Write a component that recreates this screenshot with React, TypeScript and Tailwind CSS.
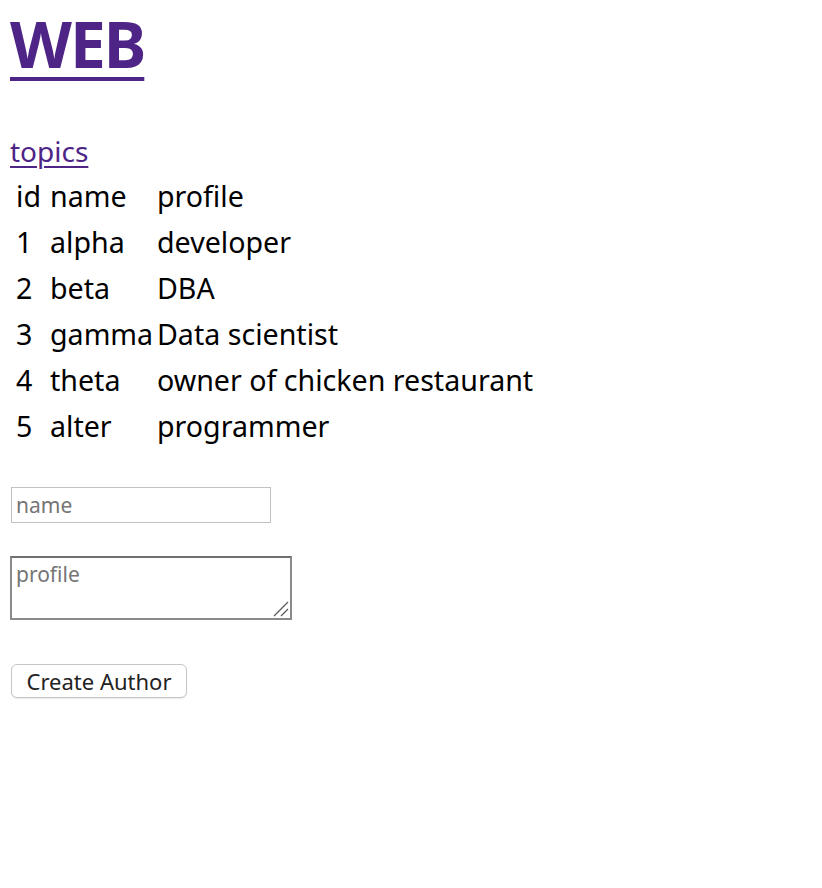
import React from "react";

type Author = { id: number; name: string; profile: string };

const authors: Author[] = [
  { id: 1, name: "alpha", profile: "developer" },
  { id: 2, name: "beta", profile: "DBA" },
  { id: 3, name: "gamma", profile: "Data scientist" },
  { id: 4, name: "theta", profile: "owner of chicken restaurant" },
  { id: 5, name: "alter", profile: "programmer" },
];

export default function App() {
  return (
    <div className="min-h-screen bg-white px-[10px] text-black font-['Noto_Sans',sans-serif]">
      <h1 className="pt-[6px] text-[64px] font-bold leading-[76px] tracking-[-2px]">
        <a href="#" className="text-[#4e2587] underline decoration-[4px] underline-offset-[9px]">
          WEB
        </a>
      </h1>

      <div className="mt-[51px] text-[28px] leading-[36px]">
        <a href="#" className="text-[#4e2587] underline decoration-[2px] underline-offset-[4px]">
          topics
        </a>
      </div>

      <div className="mt-[4px] grid grid-cols-[34px_107px_auto] pl-[6px] text-[28.6px]">
        <div className="leading-[46px]">id</div>
        <div className="leading-[46px]">name</div>
        <div className="leading-[46px]">profile</div>
        {authors.map((a) => (
          <React.Fragment key={a.id}>
            <div className="leading-[46px]">{a.id}</div>
            <div className="leading-[46px]">{a.name}</div>
            <div className="leading-[46px]">{a.profile}</div>
          </React.Fragment>
        ))}
      </div>

      <form className="mt-[38px]" onSubmit={(e) => e.preventDefault()}>
        <p>
          <input
            type="text"
            name="name"
            placeholder="name"
            className="ml-px h-[36px] w-[260px] border border-[#c2c2c2] px-[4px] text-[21px] placeholder:text-[#757575] outline-none"
          />
        </p>
        <p className="mt-[33px]">
          <span className="relative inline-block align-top">
            <textarea
              name="profile"
              placeholder="profile"
              className="block h-[64px] w-[282px] resize-none border-2 border-[#8a8a8a] border-t-[#6f6f6f] px-[4px] pt-[3px] text-[21px] leading-[26px] placeholder:text-[#757575] outline-none"
            />
            <svg
              className="pointer-events-none absolute bottom-[3px] right-[3px]"
              width="16"
              height="16"
              viewBox="0 0 16 16"
              aria-hidden
            >
              <line x1="1" y1="15" x2="15" y2="1" stroke="#5a5a5a" strokeWidth="1.3" />
              <line x1="8" y1="15" x2="15" y2="8" stroke="#5a5a5a" strokeWidth="1.3" />
            </svg>
          </span>
        </p>
        <p className="mt-[44px]">
          <button
            type="submit"
            className="ml-px h-[34px] w-[176px] rounded-[6px] border border-[#c6c6c6] bg-white text-[22px] leading-[30px] text-[#222] shadow-[0_1px_1px_rgba(0,0,0,0.08)]"
          >
            Create Author
          </button>
        </p>
      </form>
    </div>
  );
}
